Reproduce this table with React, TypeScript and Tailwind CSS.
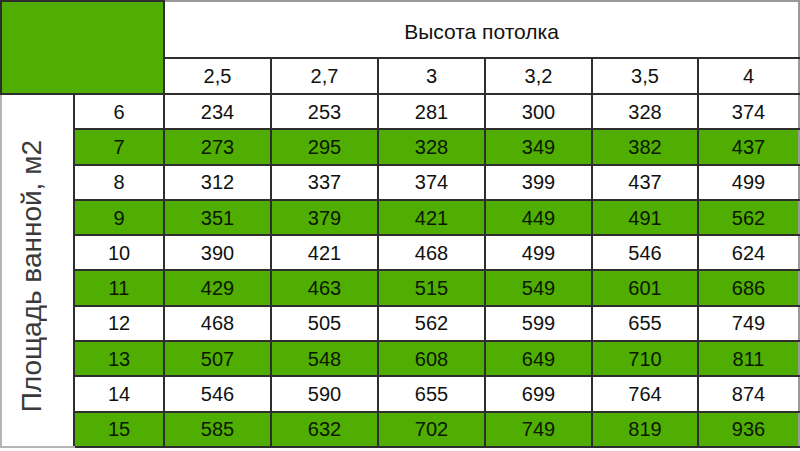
const heights = ["2,5", "2,7", "3", "3,2", "3,5", "4"];

const rows: [number, number[]][] = [
  [6, [234, 253, 281, 300, 328, 374]],
  [7, [273, 295, 328, 349, 382, 437]],
  [8, [312, 337, 374, 399, 437, 499]],
  [9, [351, 379, 421, 449, 491, 562]],
  [10, [390, 421, 468, 499, 546, 624]],
  [11, [429, 463, 515, 549, 601, 686]],
  [12, [468, 505, 562, 599, 655, 749]],
  [13, [507, 548, 608, 649, 710, 811]],
  [14, [546, 590, 655, 699, 764, 874]],
  [15, [585, 632, 702, 749, 819, 936]],
];

export default function App() {
  return (
    <div className="h-[451px] w-[800px] overflow-hidden bg-white font-['Liberation_Sans',Arial,sans-serif]">
      <table className="w-[800px] table-fixed border-collapse text-center text-[20px] text-[#111]">
        <colgroup>
          <col className="w-[73px]" />
          <col className="w-[90px]" />
          <col className="w-[107px]" />
          <col className="w-[107px]" />
          <col className="w-[107px]" />
          <col className="w-[107px]" />
          <col className="w-[106px]" />
          <col />
        </colgroup>
        <tbody>
          <tr className="h-[57px]">
            <td colSpan={2} rowSpan={2} className="border-2 border-[#2e2e2e] bg-[#50ad02]" />
            <td colSpan={6} className="border-2 border-t-[#9a9a9a] border-r-[#9a9a9a] border-[#2e2e2e] pt-1 text-[21px]">
              Высота потолка
            </td>
          </tr>
          <tr className="h-[36px]">
            {heights.map((h) => (
              <td key={h} className="border-2 border-[#2e2e2e] last:border-r-[#9a9a9a]">
                {h}
              </td>
            ))}
          </tr>
          {rows.map(([area, values], i) => {
            const green = area % 2 === 1;
            return (
              <tr key={area} className={green ? "h-[35.3px] bg-[#50ad02] text-[#0b1800]" : "h-[35.3px] bg-white"}>
                {i === 0 && (
                  <td rowSpan={10} className="border-2 border-r-[#2e2e2e] border-l-[#b5b5b5] border-b-[#b5b5b5] border-t-[#2e2e2e] bg-white p-0">
                    <div className="flex items-center justify-center">
                      <span className="mt-3 rotate-180 whitespace-nowrap pl-3 text-[28px] text-[#3a3a3a] [writing-mode:vertical-rl]">
                        Площадь ванной, м2
                      </span>
                    </div>
                  </td>
                )}
                <td className="border-2 border-[#2e2e2e]">{area}</td>
                {values.map((v, j) => (
                  <td key={j} className="border-2 border-[#2e2e2e] last:border-r-[#9a9a9a]">
                    {v}
                  </td>
                ))}
              </tr>
            );
          })}
        </tbody>
      </table>
    </div>
  );
}
